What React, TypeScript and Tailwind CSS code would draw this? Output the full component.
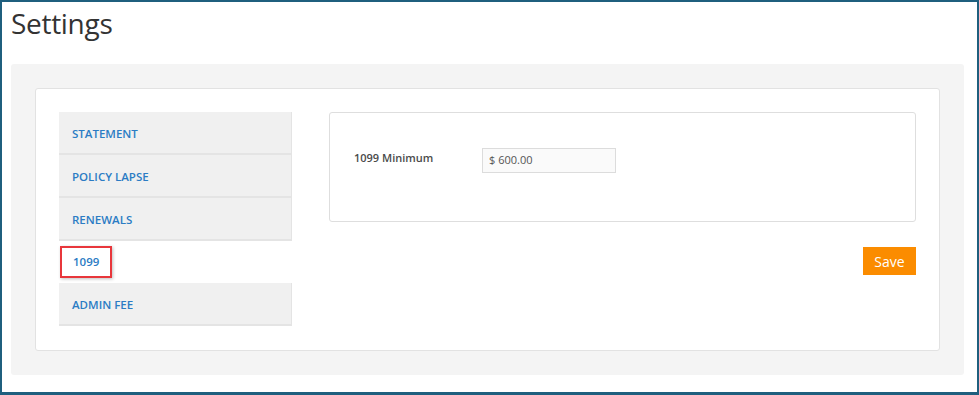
import React from "react";

// Settings page — left tab list + 1099 minimum form

const tabs = ["STATEMENT", "POLICY LAPSE", "RENEWALS", "1099", "ADMIN FEE"];
const active = "1099";

function TabItem({ label }: { label: string }) {
  if (label === active) {
    return (
      <div className="flex h-[42px] items-center">
        <div className="ml-px flex h-[32px] w-[52px] items-center border-2 border-[#e8363b] pl-[11px] shadow-[1px_1px_3px_rgba(0,0,0,0.25)]">
          <span className="text-[11.5px] font-semibold text-[#2b7cc4]">{label}</span>
        </div>
      </div>
    );
  }
  return (
    <div className="flex h-[43px] items-center border-r border-b-2 border-[#e4e4e4] bg-[#f0f0f0] pl-[13px] pt-[2px]">
      <span className="text-[11.5px] font-semibold text-[#2b7cc4]">{label}</span>
    </div>
  );
}

export default function App() {
  return (
    <div
      className="h-[395px] w-[979px] border-2 border-b-[3px] border-[#1f5f7e] bg-white text-[#333]"
      style={{ fontFamily: '"Open Sans", "Noto Sans", sans-serif' }}
    >
      <h1 className="pl-[9px] pt-[3px] text-[28px] leading-[36px] tracking-[-0.3px] text-[#333]">Settings</h1>
      <div className="ml-[9px] mr-[13px] mt-[23px] rounded-[3px] bg-[#f4f4f4] p-[24px]">
        <div className="flex h-[263px] rounded-[3px] border border-[#e2e2e2] bg-white pl-[23px] pr-[23px] pt-[23px]">
          <div className="flex w-[233px] flex-col">
            {tabs.map((t) => (
              <TabItem key={t} label={t} />
            ))}
          </div>
          <div className="ml-[37px] flex flex-1 flex-col">
            <div className="flex h-[110px] rounded-[3px] border border-[#dedede] pl-[24px] pt-[35px]">
              <div className="w-[128px] pt-[2px] text-[11px] font-semibold text-[#4a4a4a]">1099 Minimum</div>
              <div className="flex h-[25px] w-[134px] items-center border border-[#dcdcdc] bg-[#fafafa] pl-[6px] text-[11px] text-[#555]">
                $ 600.00
              </div>
            </div>
            <div className="mt-[25px] flex justify-end">
              <button className="h-[28px] w-[53px] bg-[#fb8c00] text-[14px] text-white">Save</button>
            </div>
          </div>
        </div>
      </div>
    </div>
  );
}
